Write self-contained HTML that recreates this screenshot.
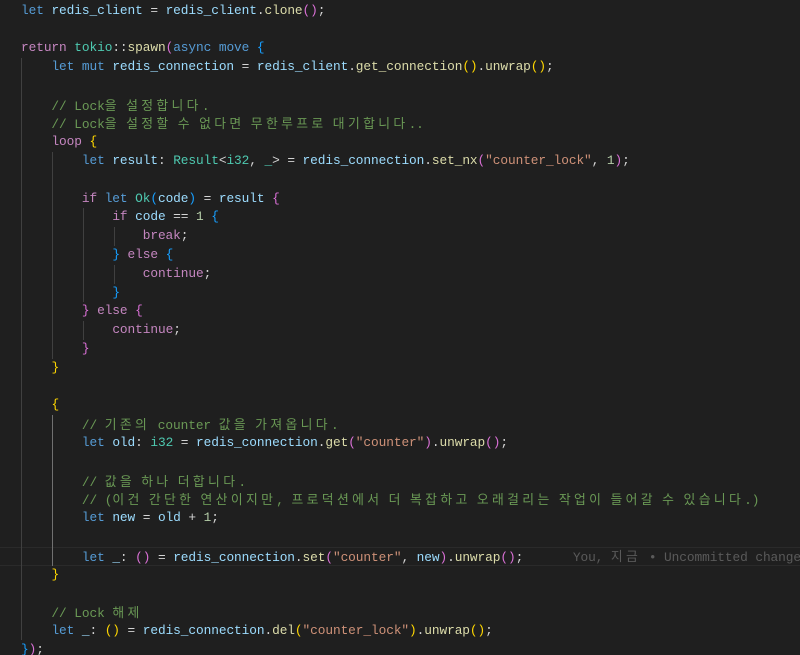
<!DOCTYPE html>
<html><head><meta charset="utf-8"><style>
html,body{margin:0;padding:0;background:#1f1f1f;width:800px;height:655px;overflow:hidden}
#ed{position:relative;width:800px;height:655px;font-family:"Liberation Mono","Noto Sans CJK KR",monospace;font-size:12.83px;letter-spacing:-0.09px;color:#d4d4d4}
.l{position:absolute;left:21px;height:18.8px;line-height:18.8px;white-space:pre;margin-top:1px}
.k{font-family:"Noto Sans CJK KR",sans-serif;letter-spacing:3.35px}
.g{position:absolute;width:1px;background:#404040;margin-top:1px}
.kw{color:#569cd6}.cf{color:#c586c0}.v{color:#9cdcfe}.f{color:#dcdcaa}.t{color:#4ec9b0}.s{color:#ce9178}.n{color:#b5cea8}.c{color:#6a9955}
.b1{color:#ffd700}.b2{color:#da70d6}.b3{color:#179fff}
.cur{position:absolute;left:0;width:800px;top:546.8px;height:17px;border-top:1px solid #2a2a2a;border-bottom:1px solid #2a2a2a}
.hint{color:#5a5a5a;margin-left:4px}
</style></head><body><div id="ed">
<div class="cur"></div>
<div class="g" style="left:21px;top:57px;height:582px"></div>
<div class="g" style="left:52px;top:151px;height:207px"></div>
<div class="g" style="left:52px;top:414px;height:151px;background:#707070"></div>
<div class="g" style="left:83px;top:207px;height:94px"></div>
<div class="g" style="left:83px;top:320px;height:19px"></div>
<div class="g" style="left:114px;top:226px;height:19px"></div>
<div class="g" style="left:114px;top:264px;height:19px"></div>
<div class="l" style="top:-18px;color:#777;font-size:11px">   ⓘ main</div>
<div class="l" style="top:0.6px"><span class="kw">let</span> <span class="v">redis_client</span> = <span class="v">redis_client</span>.<span class="f">clone</span><span class="b2">()</span>;</div>
<div class="l" style="top:38.2px"><span class="cf">return</span> <span class="t">tokio</span>::<span class="f">spawn</span><span class="b2">(</span><span class="kw">async</span> <span class="kw">move</span> <span class="b3">{</span></div>
<div class="l" style="top:57px">    <span class="kw">let</span> <span class="kw">mut</span> <span class="v">redis_connection</span> = <span class="v">redis_client</span>.<span class="f">get_connection</span><span class="b1">()</span>.<span class="f">unwrap</span><span class="b1">()</span>;</div>
<div class="l c" style="top:94.6px">    // Lock<span class="k">을 설정합니다</span>.</div>
<div class="l c" style="top:113.4px">    // Lock<span class="k">을 설정할 수 없다면 무한루프로 대기합니다</span>..</div>
<div class="l" style="top:132.2px">    <span class="cf">loop</span> <span class="b1">{</span></div>
<div class="l" style="top:151px">        <span class="kw">let</span> <span class="v">result</span>: <span class="t">Result</span>&lt;<span class="t">i32</span>, <span class="t">_</span>&gt; = <span class="v">redis_connection</span>.<span class="f">set_nx</span><span class="b2">(</span><span class="s">"counter_lock"</span>, <span class="n">1</span><span class="b2">)</span>;</div>
<div class="l" style="top:188.6px">        <span class="cf">if</span> <span class="kw">let</span> <span class="t">Ok</span><span class="b3">(</span><span class="v">code</span><span class="b3">)</span> = <span class="v">result</span> <span class="b2">{</span></div>
<div class="l" style="top:207.4px">            <span class="cf">if</span> <span class="v">code</span> == <span class="n">1</span> <span class="b3">{</span></div>
<div class="l" style="top:226.2px">                <span class="cf">break</span>;</div>
<div class="l" style="top:245px">            <span class="b3">}</span> <span class="cf">else</span> <span class="b3">{</span></div>
<div class="l" style="top:263.8px">                <span class="cf">continue</span>;</div>
<div class="l" style="top:282.6px">            <span class="b3">}</span></div>
<div class="l" style="top:301.4px">        <span class="b2">}</span> <span class="cf">else</span> <span class="b2">{</span></div>
<div class="l" style="top:320.2px">            <span class="cf">continue</span>;</div>
<div class="l" style="top:339px">        <span class="b2">}</span></div>
<div class="l" style="top:357.8px">    <span class="b1">}</span></div>
<div class="l" style="top:395.4px">    <span class="b1">{</span></div>
<div class="l c" style="top:414.2px">        // <span class="k">기존의</span> counter <span class="k">값을 가져옵니다</span>.</div>
<div class="l" style="top:433px">        <span class="kw">let</span> <span class="v">old</span>: <span class="t">i32</span> = <span class="v">redis_connection</span>.<span class="f">get</span><span class="b2">(</span><span class="s">"counter"</span><span class="b2">)</span>.<span class="f">unwrap</span><span class="b2">()</span>;</div>
<div class="l c" style="top:470.6px">        // <span class="k">값을 하나 더합니다</span>.</div>
<div class="l c" style="top:489.4px">        // (<span class="k">이건 간단한 연산이지만</span>, <span class="k">프로덕션에서 더 복잡하고 오래걸리는 작업이 들어갈 수 있습니다</span>.)</div>
<div class="l" style="top:508.2px">        <span class="kw">let</span> <span class="v">new</span> = <span class="v">old</span> + <span class="n">1</span>;</div>
<div class="l" style="top:545.8px">        <span class="kw">let</span> <span class="v">_</span>: <span class="b2">()</span> = <span class="v">redis_connection</span>.<span class="f">set</span><span class="b2">(</span><span class="s">"counter"</span>, <span class="v">new</span><span class="b2">)</span>.<span class="f">unwrap</span><span class="b2">()</span>;      <span class="hint">You, <span class="k">지금</span> • Uncommitted changes</span></div>
<div class="l" style="top:564.6px">    <span class="b1">}</span></div>
<div class="l c" style="top:602.2px">    // Lock <span class="k">해제</span></div>
<div class="l" style="top:621px">    <span class="kw">let</span> <span class="v">_</span>: <span class="b1">()</span> = <span class="v">redis_connection</span>.<span class="f">del</span><span class="b1">(</span><span class="s">"counter_lock"</span><span class="b1">)</span>.<span class="f">unwrap</span><span class="b1">()</span>;</div>
<div class="l" style="top:639.8px"><span class="b3">}</span><span class="b2">)</span>;</div>
</div></body></html>
